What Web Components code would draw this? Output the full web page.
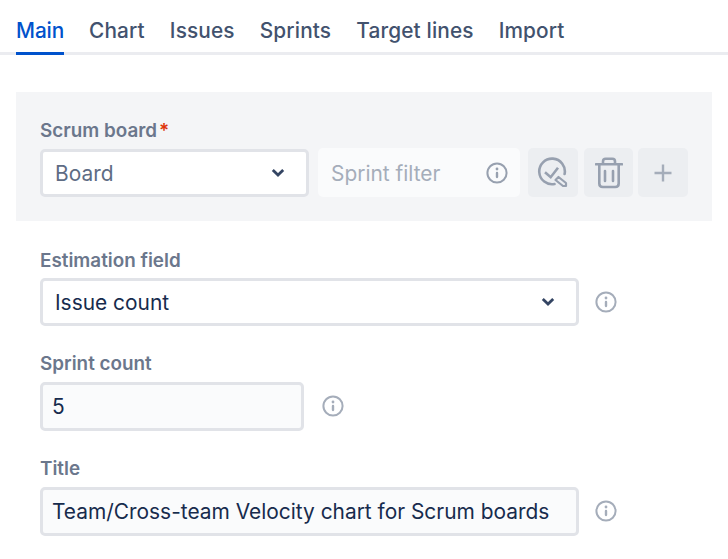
<!DOCTYPE html>
<html><head><meta charset="utf-8"><style>
html,body{margin:0;padding:0;background:#fff;overflow:hidden}
body{width:728px;height:559px;font-family:Inter,"Liberation Sans",sans-serif}
</style></head><body>
<x-app></x-app>
<script>
const INFO=(s,c)=>`<svg width="${s}" height="${s}" viewBox="0 0 22 22" fill="none" style="display:block"><circle cx="11" cy="11" r="9.6" stroke="${c}" stroke-width="2"/><circle cx="11" cy="7" r="1.4" fill="${c}"/><rect x="9.8" y="9.8" width="2.4" height="6.4" rx="1.1" fill="${c}"/></svg>`;
class Base extends HTMLElement{
  constructor(){super();this.attachShadow({mode:'open'}).innerHTML=this.tpl();}
  tpl(){return ''}
}
customElements.define('x-tabs',class extends Base{tpl(){return `<style>
:host{display:flex;gap:25px;height:55px;box-sizing:border-box;padding:0 0 0 16px;margin:0 0 37px;border-bottom:3px solid #ebecf0;font-size:20.8px;font-weight:500;color:#42526e;letter-spacing:.15px}
span{display:block;height:55px;box-sizing:border-box;padding-top:17px;line-height:28px}
.a{color:#0052cc;border-bottom:3px solid #0052cc;width:48px;white-space:nowrap;letter-spacing:-.1px}
</style><span class="a">Main</span><span>Chart</span><span>Issues</span><span>Sprints</span><span>Target lines</span><span>Import</span>`}});
customElements.define('x-label',class extends Base{tpl(){return `<style>
:host{display:block;font-size:18.85px;font-weight:600;color:#6b778c;line-height:22px;height:22px;padding-top:1px;margin-bottom:-1px}
b{color:#de350b;font-weight:600;margin-left:2px}
</style><slot></slot>${this.hasAttribute('req')?'<b>*</b>':''}`}});
customElements.define('x-select',class extends Base{tpl(){return `<style>
:host{display:flex;align-items:center;justify-content:space-between;box-sizing:border-box;height:48px;width:var(--w);padding:1px 21px 0 12px;background:#fff;border:3px solid #e1e3e8;border-radius:5px;font-size:20.9px;color:var(--c,#172b4d)}
svg{display:block;margin-top:-1px}
</style><slot></slot><svg width="14" height="10" viewBox="0 0 14 10" fill="none"><path d="M1.8 2l5.2 5 5.2-5" stroke="#344563" stroke-width="2.8"/></svg>`}});
customElements.define('x-input',class extends Base{tpl(){return `<style>
:host{display:flex;align-items:center;box-sizing:border-box;height:49px;width:var(--w);padding:1px 9px 0;background:#fafbfc;border:3px solid #e1e3e8;border-radius:5px;font-size:20.9px;color:#172b4d;white-space:nowrap}
</style><slot></slot>`}});
customElements.define('x-info',class extends Base{tpl(){return `<style>
:host{display:block;width:22px;height:22px}
</style>${INFO(22,'#a5adba')}`}});
customElements.define('x-filter',class extends Base{tpl(){return `<style>
:host{display:flex;align-items:center;justify-content:space-between;box-sizing:border-box;width:202px;height:49px;padding:1px 12px 0 13px;background:#fafbfc;border-radius:5px;font-size:20.9px;color:#a5adba}
svg{margin-top:-1px}
</style><slot></slot>${INFO(22,'#97a0af')}`}});
customElements.define('x-iconbtn',class extends Base{tpl(){return `<style>
:host{display:flex;align-items:center;justify-content:center;width:var(--w,49px);height:49px;background:#eceef1;border-radius:5px}
</style><slot></slot>`}});
customElements.define('x-field',class extends Base{tpl(){return `<style>
:host{display:block}
.r{display:flex;align-items:center;gap:16px;margin-top:7.5px}
</style><slot name="label"></slot><div class="r"><slot></slot></div>`}});
customElements.define('x-app',class extends Base{tpl(){return `<style>
:host{display:block;width:728px;height:559px;overflow:hidden}
.panel{margin:0 16px;height:129px;box-sizing:border-box;padding:27px 24px 0;background:#f4f5f7}
.row{display:flex;align-items:center}
.form{padding:27.5px 24px 0 40px;display:flex;flex-direction:column;gap:26.25px}
</style>
<x-tabs></x-tabs>
<div class="panel">
  <x-label req>Scrum board</x-label>
  <div class="row" style="margin-top:7px">
    <x-select style="--w:269px;--c:#5e6c84">Board</x-select>
    <x-filter style="margin-left:9px">Sprint filter</x-filter>
    <x-iconbtn style="margin-left:8px;--w:50px"><svg width="32" height="32" viewBox="0 0 32 32" fill="none" stroke="#97a0af" stroke-linecap="round" stroke-linejoin="round"><path d="M27.600 17A12.800 12.800 0 1 0 17.500 27" stroke-width="2.600"/><path d="M8 15.200l5.700 5 7.300-9.400" stroke-width="2.600" stroke-linecap="butt" stroke-linejoin="miter"/><path d="M21.500 20L18.500 23 26 29H29V26Z" stroke-width="2.200"/></svg></x-iconbtn>
    <x-iconbtn style="margin-left:6px"><svg width="28" height="32" viewBox="0 0 28 32" fill="none" stroke="#97a0af" stroke-width="2.600"><path d="M1 7.200h26" stroke-linecap="round"/><path d="M8 7V4.500Q8 1.800 10.700 1.800h6.600q2.700 0 2.700 2.700V7"/><path d="M4.300 8v18.500q0 3.500 3.500 3.500h12.400q3.500 0 3.500-3.500V8"/><path d="M10 14v10M18 14v10" stroke-linecap="round"/></svg></x-iconbtn>
    <x-iconbtn style="margin-left:5px;--w:50px"><svg width="20" height="20" viewBox="0 0 20 20"><path d="M10 1.500v17M1.500 10h17" stroke="#a5adba" stroke-width="2.400"/></svg></x-iconbtn>
  </div>
</div>
<div class="form">
  <x-field><x-label slot="label">Estimation field</x-label><x-select style="--w:539px">Issue count</x-select><x-info></x-info></x-field>
  <x-field><x-label slot="label">Sprint count</x-label><x-input style="--w:264px">5</x-input><x-info style="margin-left:2px"></x-info></x-field>
  <x-field><x-label slot="label">Title</x-label><x-input style="--w:539px">Team/Cross-team Velocity chart for Scrum boards</x-input><x-info></x-info></x-field>
</div>`}});
</script>
</body></html>
